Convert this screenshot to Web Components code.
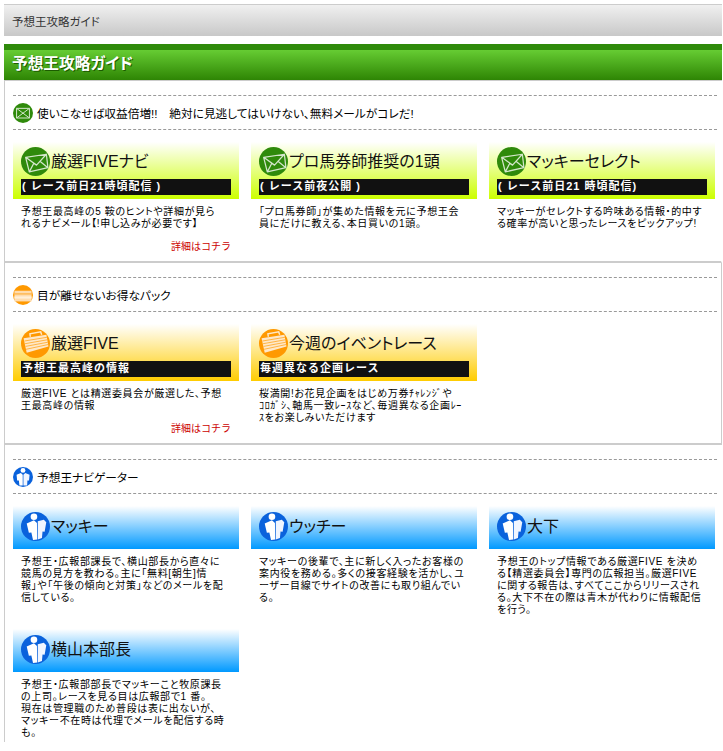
<!DOCTYPE html>
<html lang="ja">
<head>
<meta charset="utf-8">
<title>予想王攻略ガイド</title>
<style>
  html, body { margin: 0; background: #fff; }
  body {
    padding: 4px 1px 0 4px;
    color: #000;
    font-family: "Liberation Sans", "Noto Sans CJK JP", sans-serif;
  }
</style>
</head>
<body>
<yg-breadcrumb>予想王攻略ガイド</yg-breadcrumb>
<yg-title>予想王攻略ガイド</yg-title>

<yg-section icon="mail" label="使いこなせば収益倍増!!&#12288;絶対に見逃してはいけない、無料メールがコレだ!">
  <yg-card kind="mail" heading="厳選FIVEナビ" bar="( レース前日21時頃配信 )" more="詳細はコチラ">予想王最高峰の5 鞍のヒントや詳細が見ら<br>れるナビメール【!申し込みが必要です】</yg-card>
  <yg-card kind="mail" heading="プロ馬券師推奨の1頭" bar="( レース前夜公開 )">「プロ馬券師」が集めた情報を元に予想王会<br>員にだけに教える、本日買いの1頭。</yg-card>
  <yg-card kind="mail" heading="マッキーセレクト" bar="( レース前日21 時頃配信)">マッキーがセレクトする吟味ある情報・的中す<br>る確率が高いと思ったレースをピックアップ!</yg-card>
</yg-section>

<yg-section icon="pack" label="目が離せないお得なパック" boxed>
  <yg-card kind="pack" heading="厳選FIVE" bar="予想王最高峰の情報" more="詳細はコチラ">厳選FIVE とは精選委員会が厳選した、予想<br>王最高峰の情報</yg-card>
  <yg-card kind="pack" heading="今週のイベントレース" bar="毎週異なる企画レース">桜満開!お花見企画をはじめ万券ﾁｬﾚﾝｼﾞや<br>ｺﾛｶﾞｼ、軸馬一致ﾚｰｽなど、毎週異なる企画ﾚｰ<br>ｽをお楽しみいただけます</yg-card>
</yg-section>

<yg-section icon="navi" label="予想王ナビゲーター" last>
  <yg-card kind="navi" heading="マッキー">予想王・広報部課長で、横山部長から直々に<br>競馬の見方を教わる。主に「無料[朝生]情<br>報」や「午後の傾向と対策」などのメールを配<br>信している。</yg-card>
  <yg-card kind="navi" heading="ウッチー">マッキーの後輩で、主に新しく入ったお客様の<br>案内役を務める。多くの接客経験を活かし、ユ<br>ーザー目線でサイトの改善にも取り組んでい<br>る。</yg-card>
  <yg-card kind="navi" heading="大下">予想王のトップ情報である厳選FIVE を決め<br>る【精選委員会】専門の広報担当。厳選FIVE<br>に関する報告は、すべてここからリリースされ<br>る。大下不在の際は青木が代わりに情報配信<br>を行う。</yg-card>
  <yg-card kind="navi" heading="横山本部長">予想王・広報部部長でマッキーこと牧原課長<br>の上司。レースを見る目は広報部で1 番。<br>現在は管理職のため普段は表に出ないが、<br>マッキー不在時は代理でメールを配信する時<br>も。</yg-card>
</yg-section>

<script>
// icons, big one for the cards and small one for the section rows
const ICONS = {
  mail: {
    big: `<circle cx="14" cy="14" r="14" fill="#2f8a0b"/>
      <path d="M4.5 10 24.5 7 26 20 8 24Z M4.5 10 15 17.5 24.5 7 M8 24 12.5 15.5 M26 20 18 13.5" fill="none" stroke="#d4e6cb" stroke-width="1.2" stroke-linejoin="round"/>`,
    small: `<circle cx="14" cy="14" r="14" fill="#2f8a0b"/>
      <path d="M5 7.5H23V21H5Z M5 7.5 23 21 M23 7.5 5 21" fill="none" stroke="#d4e6cb" stroke-width="1.4"/>`
  },
  pack: {
    big: `<circle cx="14" cy="14" r="14" fill="#ff9900"/>
      <path d="M9 7.5 8.6 4.6 19 2.8 20 5.6" fill="none" stroke="#ffe9c9" stroke-width="1.4"/>
      <path d="M2.5 9 24.5 5.5 26.5 17 5.5 23Z" fill="#ffe8c8"/>
      <path d="M3.4 11.6 25 8 M3.9 14.2 25.4 10.4 M4.4 16.8 25.8 12.8 M4.9 19.6 26.2 15" stroke="#ffa928" stroke-width=".8" fill="none"/>`,
    small: `<circle cx="14" cy="14" r="14" fill="#ff9900"/>
      <path d="M2 8H26V23H2Z" fill="#ffdcae"/>
      <path d="M2 12.5H26" stroke="#ffa928" stroke-width="1.4"/>
      <path d="M2 17.5H26" stroke="#ffefd8" stroke-width="3"/>`
  },
  navi: {
    big: `<circle cx="14" cy="14" r="14" fill="#0a62dc"/>
      <circle cx="12.5" cy="4.6" r="3.2" fill="#fff"/>
      <path d="M5.5 11 12.5 8 15.4 10.5 15.6 26.6 11.6 27 10 19.8 7.6 20Z" fill="#fff"/>
      <path d="M16.2 9 22 7.6 24.4 10 22.8 19 20.8 18.8 20.2 25 16.2 26.6Z" fill="#f0f5ff"/>`,
    small: `<circle cx="14" cy="14" r="14" fill="#0a62dc"/>
      <circle cx="14" cy="4.8" r="3.4" fill="#fff"/>
      <path d="M5 11 11 8.4 13.6 11 13.6 26 9 26 8.2 19 5.8 19Z" fill="#fff"/>
      <path d="M14.6 11 17.2 8.4 23.2 11 22.4 19 20.2 19 19.8 26 14.6 26Z" fill="#f0f5ff"/>`
  }
};

class YgIcon extends HTMLElement {
  connectedCallback() {
    const size = this.hasAttribute('small') ? 20 : 29;
    const set = ICONS[this.getAttribute('type')] || ICONS.mail;
    this.attachShadow({ mode: 'open' }).innerHTML = `
      <style>
        :host { display: block; flex: none; width: ${size}px; height: ${size}px; }
        svg { display: block; }
      </style>
      <svg width="${size}" height="${size}" viewBox="0 0 28 28">${this.hasAttribute('small') ? set.small : set.big}</svg>
    `;
  }
}

class YgBreadcrumb extends HTMLElement {
  constructor() {
    super();
    this.attachShadow({ mode: 'open' }).innerHTML = `
      <style>
        :host {
          display: flex;
          align-items: center;
          box-sizing: border-box;
          height: 32px;
          margin-bottom: 8px;
          padding-left: 8px;
          border-top: 1px solid #ccc;
          background: linear-gradient(#f0f0f0, #c8c8c8);
          color: #333;
          font-size: 11.5px;
          font-feature-settings: "palt";
        }
      </style>
      <slot></slot>
    `;
  }
}

class YgTitle extends HTMLElement {
  constructor() {
    super();
    this.attachShadow({ mode: 'open' }).innerHTML = `
      <style>
        :host {
          display: block;
          box-sizing: border-box;
          height: 37px;
          border-top: 6px solid #2f8a0b;
          border-bottom: 1px solid #ccc;
          background: linear-gradient(#66cc33, #2e8504);
        }
        h1 {
          margin: 0;
          padding-left: 8px;
          color: #fff;
          font-size: 15.7px;
          font-weight: bold;
          line-height: 27px;
          font-feature-settings: "palt";
          text-shadow: 1px 1px 0 #1c5c00;
        }
      </style>
      <h1><slot></slot></h1>
    `;
  }
}

class YgSection extends HTMLElement {
  connectedCallback() {
    const boxed = this.hasAttribute('boxed');
    const last = this.hasAttribute('last');
    this.attachShadow({ mode: 'open' }).innerHTML = `
      <style>
        :host {
          display: block;
          box-sizing: border-box;
          padding: 14px 4px ${last ? 3 : 8}px 8px;
          border-left: 1px solid #ccc;
          border-right: 1px solid ${boxed ? '#ccc' : 'transparent'};
          ${last ? '' : 'border-bottom: 2px solid #ccc;'}
        }
        .label {
          display: flex;
          align-items: center;
          gap: 4px;
          box-sizing: border-box;
          height: 35px;
          border-top: 1px dashed #999;
          border-bottom: 1px dashed #999;
          font-size: 11.7px;
          font-feature-settings: "palt";
        }
        .cards {
          display: grid;
          grid-template-columns: repeat(3, 226px);
          column-gap: 12px;
          row-gap: 13px;
          margin-top: 12px;
        }
      </style>
      <div class="label"><yg-icon small type="${this.getAttribute('icon')}"></yg-icon><span>${this.getAttribute('label')}</span></div>
      <div class="cards"><slot></slot></div>
    `;
  }
}

class YgCard extends HTMLElement {
  connectedCallback() {
    const kind = this.getAttribute('kind');
    const bar = this.getAttribute('bar');
    const more = this.getAttribute('more');
    const ends = { mail: '#ccff00', pack: '#ffcc00', navi: '#0099ff' };
    this.attachShadow({ mode: 'open' }).innerHTML = `
      <style>
        :host { display: block; font-size: 10px; line-height: 12px; }
        .head {
          box-sizing: border-box;
          height: ${bar ? 57 : 43}px;
          padding: ${bar ? 5 : 6}px 8px 0;
          background: linear-gradient(#fff, ${ends[kind]});
        }
        .name {
          display: flex;
          align-items: center;
          gap: 1px;
          color: #111;
          font-size: 16px;
          line-height: 29px;
          font-feature-settings: "palt";
        }
        .bar {
          height: 16px;
          margin-top: 3px;
          padding-left: 1px;
          background: #111;
          color: #fff;
          font-size: 11px;
          font-weight: bold;
          line-height: 15px;
          letter-spacing: 1px;
          white-space: pre;
        }
        .desc {
          padding: 7px 8px 0;
          letter-spacing: .65px;
          white-space: nowrap;
          font-feature-settings: "palt";
        }
        .more {
          margin-top: 11px;
          padding-right: 8px;
          color: #cc0000;
          text-align: right;
        }
      </style>
      <div class="head">
        <div class="name"><yg-icon type="${kind}"></yg-icon><span>${this.getAttribute('heading')}</span></div>
        ${bar ? `<div class="bar">${bar}</div>` : ''}
      </div>
      <div class="desc"><slot></slot></div>
      ${more ? `<div class="more">${more}</div>` : ''}
    `;
  }
}

customElements.define('yg-icon', YgIcon);
customElements.define('yg-breadcrumb', YgBreadcrumb);
customElements.define('yg-title', YgTitle);
customElements.define('yg-section', YgSection);
customElements.define('yg-card', YgCard);
</script>
</body>
</html>
